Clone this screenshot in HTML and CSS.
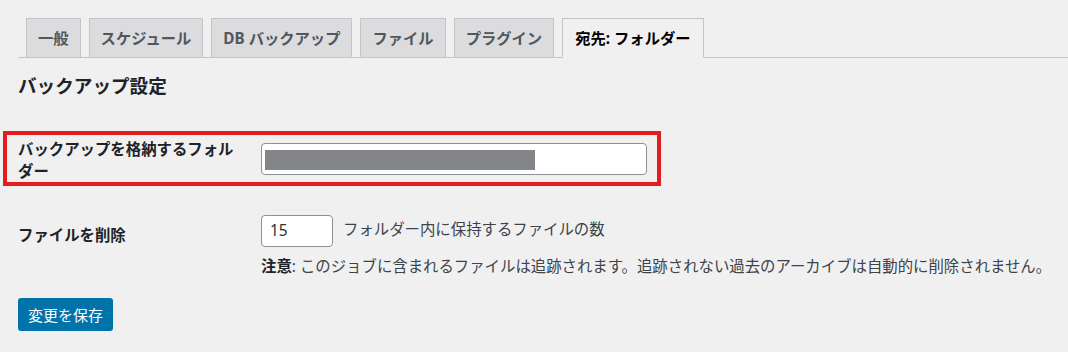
FILE: index.html
```html
<!DOCTYPE html>
<html lang="ja">
<head>
  <title>宛先: フォルダー</title>
  <meta charset="UTF-8">
  <link rel="stylesheet" href="styles.css">
</head>
<body>
  <div class="wrap">
    <div class="nav-tabs">
      <a class="nav-tab">一般</a>
      <a class="nav-tab">スケジュール</a>
      <a class="nav-tab">DB バックアップ</a>
      <a class="nav-tab">ファイル</a>
      <a class="nav-tab">プラグイン</a>
      <a class="nav-tab nav-tab-active">宛先: フォルダー</a>
    </div>

    <h2 class="section-title">バックアップ設定</h2>

    <div class="form-row highlighted">
      <div class="form-label">バックアップを格納するフォル<br>ダー</div>
      <div class="form-field">
        <div class="text-input wide"><span class="redacted"></span></div>
      </div>
      <div class="highlight-box"></div>
    </div>

    <div class="form-row delete-row">
      <div class="form-label single">ファイルを削除</div>
      <div class="form-field">
        <div class="inline-field">
          <div class="text-input small">15</div>
          <span class="field-desc">フォルダー内に保持するファイルの数</span>
        </div>
        <p class="note"><strong>注意</strong>: このジョブに含まれるファイルは追跡されます。追跡されない過去のアーカイブは自動的に削除されません。</p>
      </div>
    </div>

    <button class="save-button">変更を保存</button>
  </div>
</body>
</html>
```

FILE: styles.css
```css
body {
  margin: 0;
  background-color: #f0f0f1;
  font-family: "Noto Sans", "Noto Sans CJK JP", sans-serif;
  font-size: 15.4px;
  color: #1d2327;
}
.wrap {
  padding-left: 18px;
}
.nav-tabs {
  display: flex;
  gap: 8px;
  padding: 18px 0 0 8px;
  border-bottom: 1px solid #c3c4c7;
}
.nav-tab {
  display: block;
  margin-bottom: -1px;
  padding: 7px 11px;
  line-height: 24px;
  font-size: 15.3px;
  font-weight: 700;
  color: #50575e;
  background-color: #dcdcde;
  border: 1px solid #c3c4c7;
  white-space: nowrap;
}
.nav-tab-active {
  color: #000;
  background-color: #f0f0f1;
  border-bottom-color: #f0f0f1;
  padding: 7px 12px;
}
.section-title {
  margin: 16px 0 0 0;
  font-size: 18.6px;
  line-height: 24px;
  font-weight: 700;
}
.form-row {
  display: flex;
  align-items: flex-start;
}
.highlighted {
  position: relative;
  margin-top: 41px;
}
.highlight-box {
  position: absolute;
  left: -15px;
  top: -8px;
  width: 650px;
  height: 47px;
  border: 4px solid #e21c1f;
}
.form-label {
  width: 243px;
  flex-shrink: 0;
  font-weight: 700;
  line-height: 22px;
}
.form-label.single {
  margin-top: 10px;
}
.form-field {
  display: flex;
  flex-direction: column;
}
.highlighted .form-field {
  padding-top: 4px;
}
.text-input {
  box-sizing: border-box;
  height: 32px;
  background-color: #fff;
  border: 1px solid #8c8f94;
  border-radius: 4px;
}
.text-input.wide {
  width: 386px;
  padding: 6px 3px;
}
.redacted {
  display: block;
  width: 270px;
  height: 20px;
  background-color: #848589;
}
.text-input.small {
  width: 72px;
  padding: 0 8px;
  line-height: 30px;
  font-size: 15.4px;
  color: #2c3338;
}
.delete-row {
  margin-top: 32px;
}
.inline-field {
  display: flex;
  align-items: center;
  gap: 10px;
}
.field-desc {
  color: #3c434a;
  line-height: 22px;
  margin-top: -2px;
}
.note {
  margin: 9px 0 0 0;
  line-height: 22px;
  color: #3c434a;
}
.note strong {
  color: #1d2327;
}
.save-button {
  margin-top: 20px;
  height: 33px;
  padding: 0 10px;
  background-color: #0073aa;
  color: #fff;
  border: none;
  border-radius: 3px;
  font-family: inherit;
  font-size: 15px;
  cursor: pointer;
}
```
